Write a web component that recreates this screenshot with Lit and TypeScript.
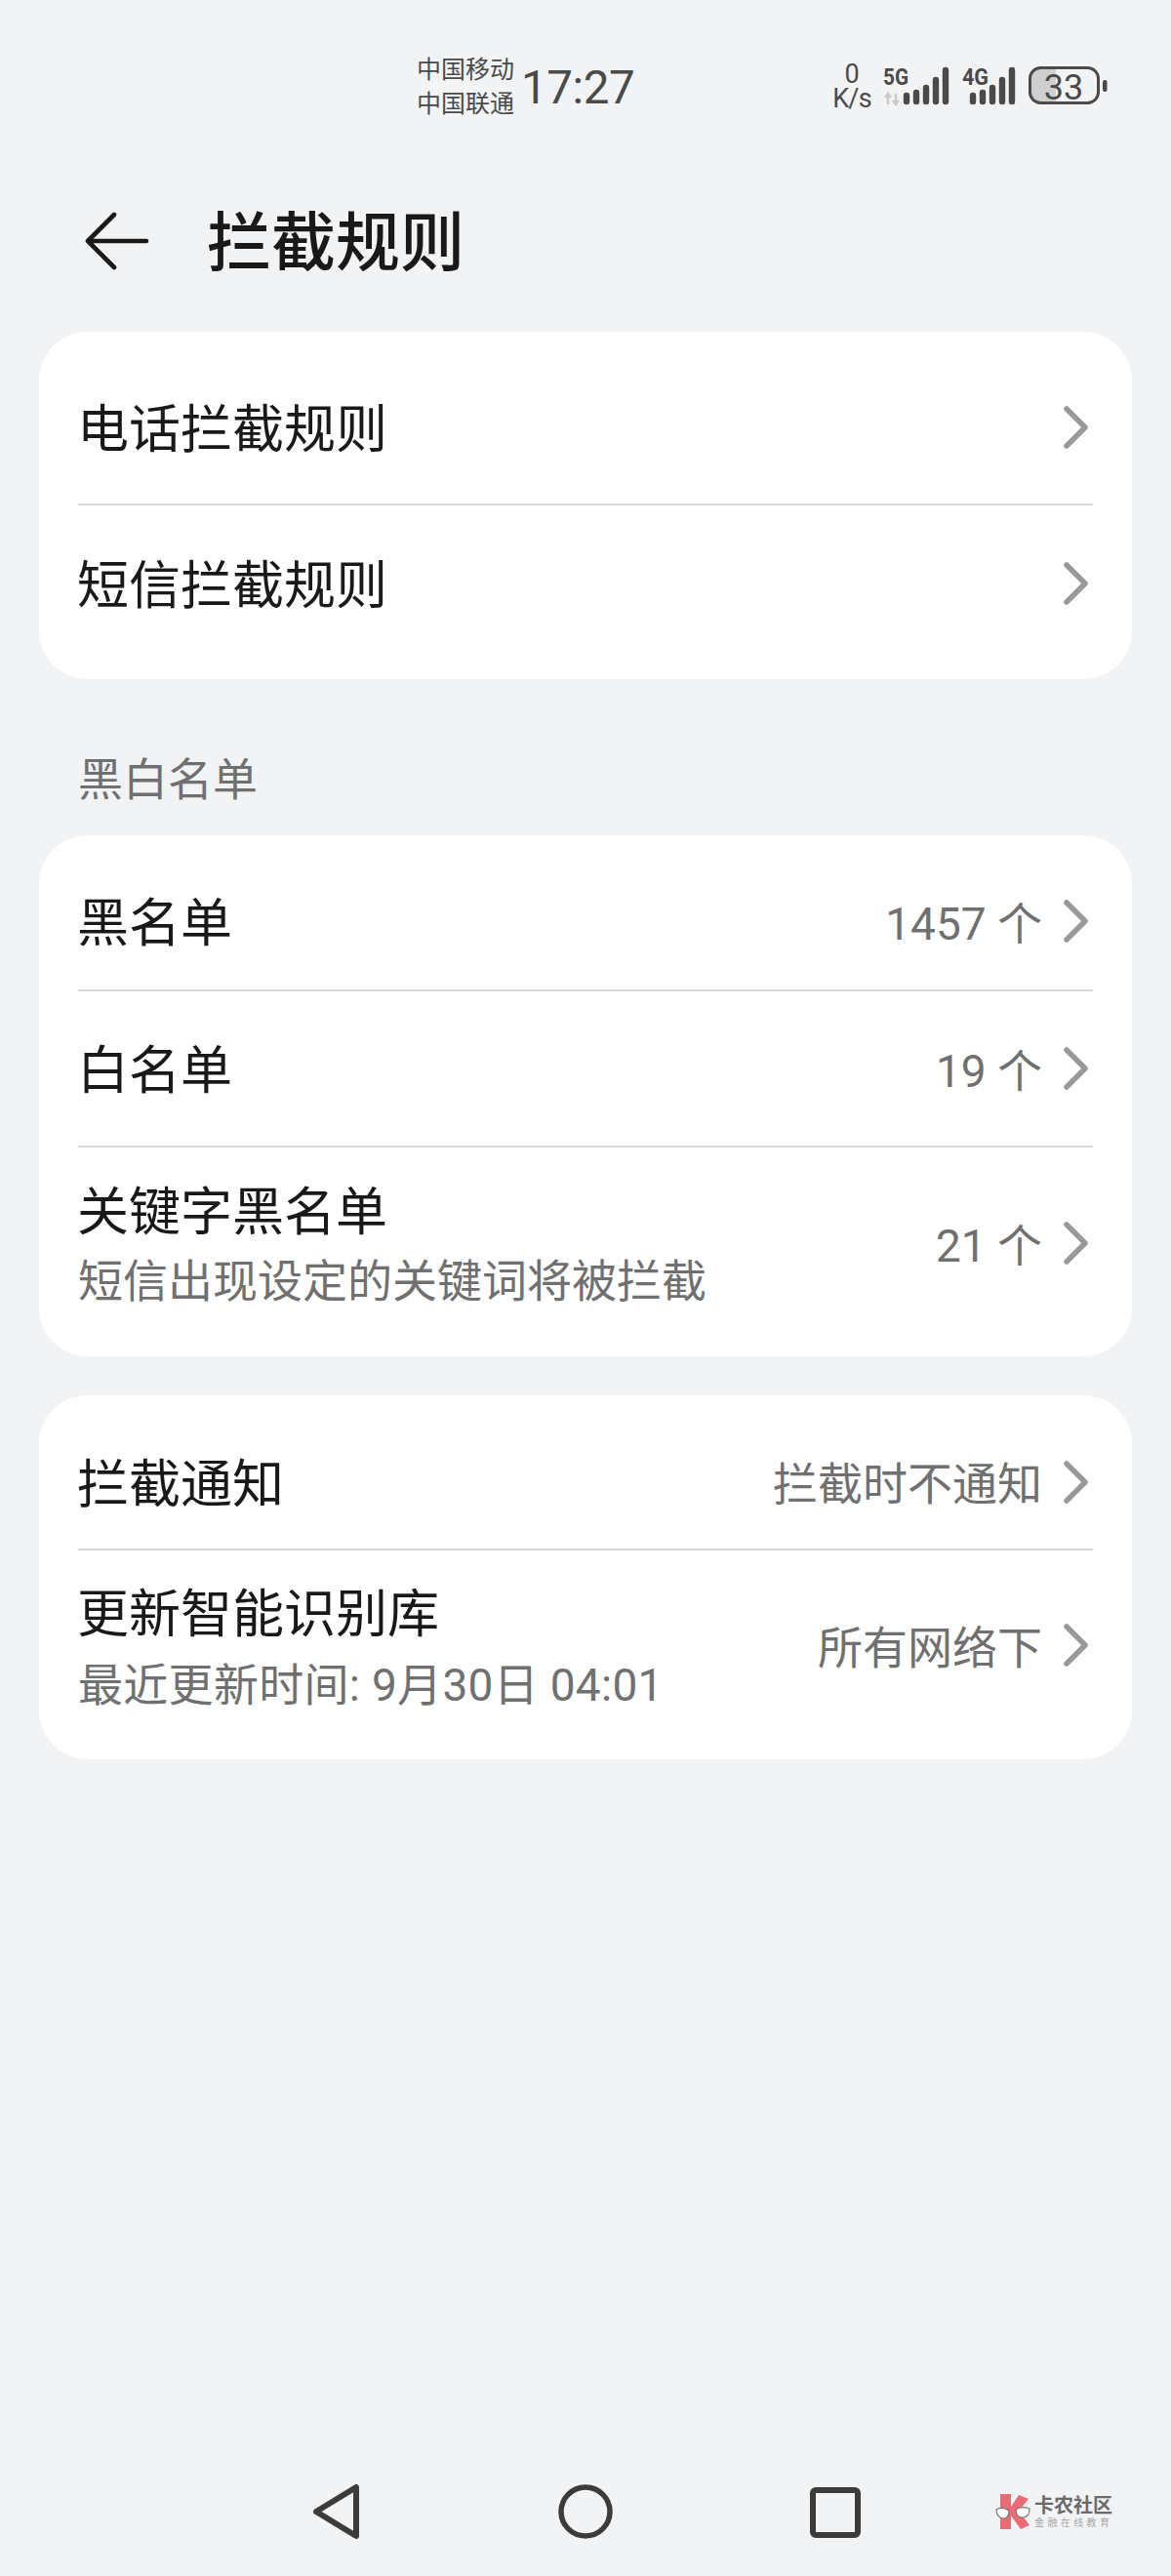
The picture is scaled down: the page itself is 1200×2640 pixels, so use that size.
import { LitElement, html, css } from "lit";
import { customElement } from "lit/decorators.js";

const chev = html`<svg class="chev" viewBox="0 0 30 48"><path d="M5 5 L24 24 L5 43" fill="none" stroke="#999999" stroke-width="5.5" stroke-linecap="round" stroke-linejoin="round"/></svg>`;

@customElement("app-root")
export class AppRoot extends LitElement {
  static styles = css`
    :host { display: flex; flex-direction: column; width: 1200px; height: 2640px; background: #f1f3f5; font-family: Roboto, "Noto Sans CJK SC", sans-serif; color: #191919; overflow: hidden; }
    .status { height: 145px; flex: none; display: flex; align-items: flex-start; color: #4a4a4a; }
    .carriers { margin-left: 427px; margin-top: 54px; width: 101px; font-size: 25px; line-height: 35px; white-space: nowrap; }
    .clock { font-size: 47.5px; line-height: 60px; margin-left: 6px; margin-top: 60px; letter-spacing: -0.4px; width: 120px; white-space: nowrap; }
    .speed { width: 44px; margin-left: 197px; font-size: 27px; line-height: 25px; text-align: center; margin-top: 64px; }
    .speed span { letter-spacing: -0.8px; }
    .sysicons { display: block; margin-left: 5px; margin-top: 60px; }
    .header { height: 64px; flex: none; display: flex; align-items: center; margin-top: 71px; }
    .back { width: 70px; height: 64px; margin-left: 85px; display: block; flex: none; }
    .title { margin-left: 57px; font-size: 66px; font-weight: 500; line-height: 80px; padding-top: 3px; }
    .card { background: #fff; border-radius: 50px; margin: 0 40px; padding: 0 40px; flex: none; }
    .c1 { margin-top: 60px; padding-top: 19px; padding-bottom: 19px; }
    .c2 { padding-top: 18px; padding-bottom: 18px; }
    .c3 { margin-top: 40px; padding-top: 20px; padding-bottom: 20px; }
    .row { display: flex; align-items: center; justify-content: space-between; border-bottom: 2px solid #d8d8d8; box-sizing: border-box; }
    .row:last-child { border-bottom: 0; }
    .h-full { height: 159px; }
    .h-a { height: 142px; }
    .h-b { height: 160px; }
    .h-c { height: 196px; }
    .h-d { height: 139px; }
    .h-e { height: 194px; }
    .name { font-size: 53px; line-height: 70px; padding-top: 6px; margin-left: -1px; }
    .sub { font-size: 46px; line-height: 71px; color: #707070; white-space: nowrap; }
    .two { padding-top: 2px; }
    .two2 { padding-top: 6px; }
    .sub2 { letter-spacing: 0.3px; line-height: 74px; }
    .right { display: flex; align-items: center; color: #707070; font-size: 46px; white-space: nowrap; }
    .val { padding-bottom: 3px; }
    .chev { width: 30px; height: 48px; margin-left: 20px; margin-right: 2px; display: block; flex: none; }
    .section { font-size: 46px; line-height: 60px; color: #707070; padding-left: 80px; margin-top: 73px; margin-bottom: 27px; flex: none; }
    .nav { margin-top: auto; margin-bottom: 38px; height: 56px; display: flex; align-items: center; flex: none; }
    .nav svg { display: block; flex: none; }
    .i1 { margin-left: 318px; }
    .i2 { margin-left: 198px; }
    .i3 { margin-left: 198px; }
    .logo { margin-left: 136px; display: flex; align-items: center; }
    .logotext { margin-left: 4px; }
    .l1 { font-size: 20px; line-height: 22px; font-weight: 700; white-space: nowrap; color: #6a6a6a; }
    .l2 { font-size: 10px; line-height: 13px; color: #a8a8a8; letter-spacing: 3.4px; white-space: nowrap; }
  `;

  render() {
    return html`
      <div class="status">
        <div class="carriers">中国移动<br />中国联通</div>
        <div class="clock">17:27</div>
        <div class="speed">0<br /><span>K/s</span></div>
        <svg class="sysicons" width="240" height="55" viewBox="900 60 240 55">
          <text x="905" y="87" font-family="Roboto" font-size="23" font-weight="700" fill="#4a4a4a" textLength="26" lengthAdjust="spacingAndGlyphs">5G</text>
          <path d="M910 107V96M907 100l3-4 3 4M918 96v11M915 103l3 4 3-4" stroke="#cacaca" stroke-width="2.4" fill="none"/>
          <g stroke="#4a4a4a" stroke-width="6.4" stroke-linecap="round" fill="none">
            <path d="M929 98v6M939 95v9M949 90v14M959 82v22M969 72v32"/>
            <path d="M997 98v6M1007 95v9M1017 90v14M1027 82v22M1037 72v32"/>
          </g>
          <text x="986" y="87" font-family="Roboto" font-size="23" font-weight="700" fill="#4a4a4a" textLength="27" lengthAdjust="spacingAndGlyphs">4G</text>
          <path d="M1056 80a10 10 0 0 1 10-10h16v35h-16a10 10 0 0 1-10-10z" fill="#cfcfcf"/>
          <rect x="1055.5" y="69.5" width="70" height="36" rx="11" fill="none" stroke="#4a4a4a" stroke-width="3"/>
          <rect x="1130" y="82" width="4.5" height="12" rx="2" fill="#4a4a4a"/>
          <text x="1090" y="102" text-anchor="middle" font-family="Roboto" font-size="36" fill="#4a4a4a">33</text>
        </svg>
      </div>
      <div class="header">
        <svg class="back" viewBox="0 0 70 64"><path d="M32 4 L5 31 L32 58 M5 31 H65" fill="none" stroke="#191919" stroke-width="4.6" stroke-linecap="round" stroke-linejoin="round"/></svg>
        <div class="title">拦截规则</div>
      </div>
      <div class="card c1">
        <div class="row h-full"><div class="name">电话拦截规则</div><div class="right">${chev}</div></div>
        <div class="row h-full"><div class="name">短信拦截规则</div><div class="right">${chev}</div></div>
      </div>
      <div class="section">黑白名单</div>
      <div class="card c2">
        <div class="row h-a"><div class="name">黑名单</div><div class="right"><span class="val">1457 个</span>${chev}</div></div>
        <div class="row h-b"><div class="name">白名单</div><div class="right"><span class="val">19 个</span>${chev}</div></div>
        <div class="row h-c"><div class="two"><div class="name">关键字黑名单</div><div class="sub">短信出现设定的关键词将被拦截</div></div><div class="right"><span class="val">21 个</span>${chev}</div></div>
      </div>
      <div class="card c3">
        <div class="row h-d"><div class="name">拦截通知</div><div class="right"><span class="val">拦截时不通知</span>${chev}</div></div>
        <div class="row h-e"><div class="two2"><div class="name">更新智能识别库</div><div class="sub sub2">最近更新时间: 9月30日 04:01</div></div><div class="right"><span class="val">所有网络下</span>${chev}</div></div>
      </div>
      <div class="nav">
        <svg class="i1" width="54" height="60" viewBox="0 0 54 60"><path d="M47 5 V55 L6 30 Z" fill="none" stroke="#3b3b3b" stroke-width="6" stroke-linejoin="round"/></svg>
        <svg class="i2" width="60" height="60" viewBox="0 0 60 60"><circle cx="30" cy="30" r="25" fill="none" stroke="#3b3b3b" stroke-width="5.5"/></svg>
        <svg class="i3" width="56" height="56" viewBox="0 0 56 56"><rect x="5" y="6" width="46" height="46" rx="3" fill="none" stroke="#3b3b3b" stroke-width="6"/></svg>
        <div class="logo">
          <svg width="36" height="38" viewBox="0 0 36 38">
            <path d="M5 1h11v13l8-12 10 4-10 12 11 15-9 4-10-14v14H5z" fill="#ec6a73"/>
            <path d="M1 17c4-3 9-2 13 1 0 5-2 8-6 8-4 0-7-4-7-9zM21 17c4-3 9-3 14-1 0 6-3 9-7 9-4 0-7-3-7-8z" fill="#fff" stroke="#777" stroke-width="1.2"/>
          </svg>
          <div class="logotext"><div class="l1">卡农社区</div><div class="l2">金融在线教育</div></div>
        </div>
      </div>
    `;
  }
}
